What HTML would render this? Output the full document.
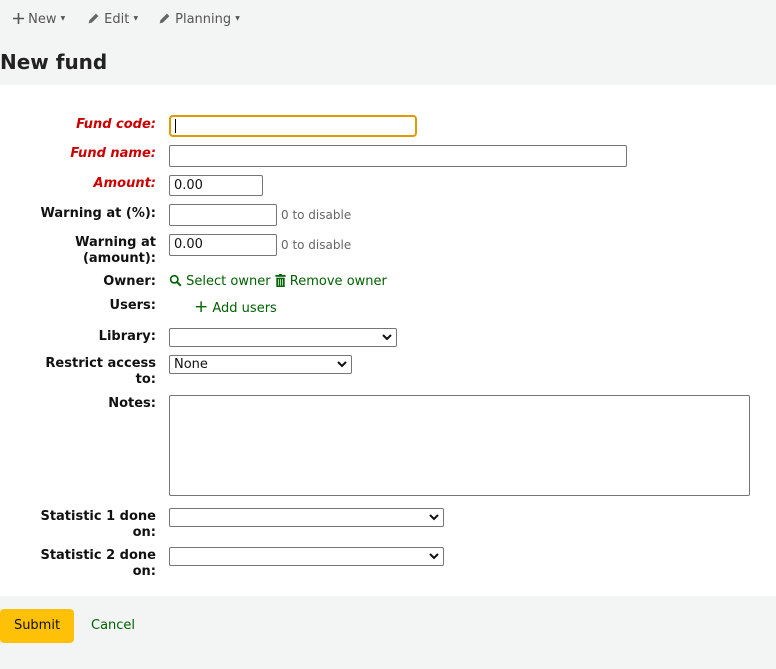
<!DOCTYPE html>
<html><head><style>
body{margin:0;width:776px;height:669px;background:#f3f4f4;font-family:"DejaVu Sans","Liberation Sans",sans-serif;font-size:13px;color:#111;position:relative;overflow:hidden}
.a{position:absolute}
.main{position:absolute;left:0;top:85px;width:776px;height:511px;background:#fff}
.l{position:absolute;right:620px;text-align:right;font-weight:bold;line-height:16px;white-space:nowrap;margin-top:2px}
.r{color:#c00;font-style:italic}
.in{position:absolute;border:1px solid #767676;border-radius:2px;background:#fff;box-sizing:border-box;padding-left:4px;line-height:18px}
.hint{position:absolute;color:#666;font-size:12px;margin-top:1px}
.g{color:#006100}
.chev{position:absolute;right:4px;top:5px}
.nav{position:absolute;top:11px;color:#555;font-size:13px;line-height:16px;height:16px}
</style></head><body>
<div class="nav" style="left:13px"><svg width="11" height="11" viewBox="0 0 11 11" style="vertical-align:-1px"><path d="M5.5 0v11M0 5.5h11" stroke="#555" stroke-width="1.6"/></svg> New <span style="font-size:6px;vertical-align:3px">▼</span></div>
<div class="nav" style="left:87px"><svg width="13" height="13" viewBox="0 0 16 16" style="vertical-align:-2px"><path d="M2 14l1-4 8-8 3 3-8 8z" fill="#666"/></svg> Edit <span style="font-size:6px;vertical-align:3px">▼</span></div>
<div class="nav" style="left:158px"><svg width="13" height="13" viewBox="0 0 16 16" style="vertical-align:-2px"><path d="M2 14l1-4 8-8 3 3-8 8z" fill="#666"/></svg> Planning <span style="font-size:6px;vertical-align:3px">▼</span></div>
<div class="a" style="left:0;top:50px;font-size:20px;font-weight:bold;color:#222">New fund</div>
<div class="main"></div>

<div class="l r" style="top:115px">Fund code:</div>
<div class="in" style="left:169px;top:115px;width:248px;height:22px;border:2px solid #e09a00;border-radius:4px"><span style="display:inline-block;width:1px;height:14px;background:#000;margin-top:2px"></span></div>
<div class="l r" style="top:144px">Fund name:</div>
<div class="in" style="left:169px;top:145px;width:458px;height:22px"></div>
<div class="l r" style="top:174px">Amount:</div>
<div class="in" style="left:169px;top:175px;width:94px;height:21px;line-height:20px">0.00</div>
<div class="l" style="top:204px">Warning at (%):</div>
<div class="in" style="left:169px;top:204px;width:108px;height:22px"></div>
<div class="hint" style="left:281px;top:207px">0 to disable</div>
<div class="l" style="top:233px">Warning at<br>(amount):</div>
<div class="in" style="left:169px;top:234px;width:108px;height:22px;line-height:20px">0.00</div>
<div class="hint" style="left:281px;top:237px">0 to disable</div>
<div class="l" style="top:272px">Owner:</div>
<div class="a g" style="left:169px;top:274px;line-height:16px"><svg width="13" height="13" viewBox="0 0 16 16" style="vertical-align:-2px"><circle cx="6.5" cy="6.5" r="4.5" fill="none" stroke="#006100" stroke-width="2"/><path d="M10 10l4.5 4.5" stroke="#006100" stroke-width="2.5"/></svg> Select owner <svg width="11" height="13" viewBox="0 0 11 14" style="vertical-align:-2px"><rect x="0" y="1" width="11" height="2" fill="#006100"/><rect x="4" y="0" width="3" height="2" fill="#006100"/><path d="M1 4h9v10H1z" fill="#006100"/><path d="M3.5 5.5v7M5.5 5.5v7M7.5 5.5v7" stroke="#fff" stroke-width=".8"/></svg> Remove owner</div>
<div class="l" style="top:296px">Users:</div>
<div class="a g" style="left:194px;top:299px;line-height:16px"><b style="font-size:17px;font-weight:normal">+</b> Add users</div>
<div class="l" style="top:327px">Library:</div>
<div class="in" style="left:169px;top:328px;width:228px;height:19px"><svg class="chev" width="10" height="7" viewBox="0 0 10 7"><path d="M1 1l4 4 4-4" fill="none" stroke="#111" stroke-width="2"/></svg></div>
<div class="l" style="top:354px">Restrict access<br>to:</div>
<div class="in" style="left:169px;top:355px;width:183px;height:19px;line-height:18px">None<svg class="chev" width="10" height="7" viewBox="0 0 10 7"><path d="M1 1l4 4 4-4" fill="none" stroke="#111" stroke-width="2"/></svg></div>
<div class="l" style="top:394px">Notes:</div>
<div class="in" style="left:169px;top:395px;width:581px;height:101px"></div>
<div class="l" style="top:507px">Statistic 1 done<br>on:</div>
<div class="in" style="left:169px;top:508px;width:275px;height:19px"><svg class="chev" width="10" height="7" viewBox="0 0 10 7"><path d="M1 1l4 4 4-4" fill="none" stroke="#111" stroke-width="2"/></svg></div>
<div class="l" style="top:546px">Statistic 2 done<br>on:</div>
<div class="in" style="left:169px;top:547px;width:275px;height:19px"><svg class="chev" width="10" height="7" viewBox="0 0 10 7"><path d="M1 1l4 4 4-4" fill="none" stroke="#111" stroke-width="2"/></svg></div>

<div class="a" style="left:0;top:609px;width:74px;height:34px;background:#ffc107;border-radius:4px;text-align:center;line-height:34px">Submit</div>
<div class="a g" style="left:91px;top:618px">Cancel</div>
</body></html>
